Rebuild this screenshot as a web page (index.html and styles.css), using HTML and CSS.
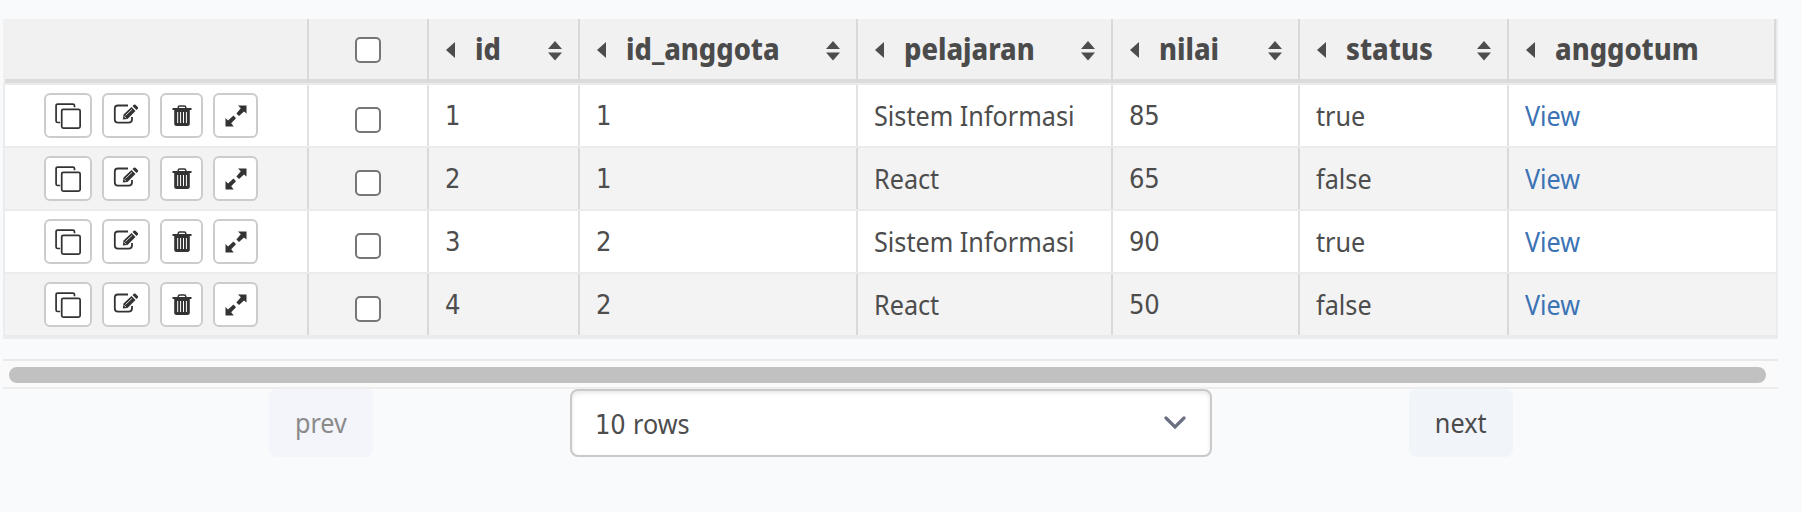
FILE: index.html
```
<!DOCTYPE html>
<html lang="en">
<head>
<meta charset="utf-8">
<title>Records</title>
<link rel="stylesheet" href="styles.css">
</head>
<body>
<svg class="defs" width="0" height="0">
  <symbol id="copy" viewBox="0 0 24 24"><path d="M4.8 18H2.5Q1 18 1 16.5V2.500Q1 1 2.500 1H16.500Q18 1 18 2.500V4" fill="none" stroke="currentColor" stroke-width="1.600"/><rect x="6.200" y="5.900" width="17" height="17.300" rx="1.500" fill="none" stroke="currentColor" stroke-width="1.600"/></symbol>
  <symbol id="edit" viewBox="0 0 26 22"><path d="M15 2.500H5Q1.800 2.500 1.800 5.700V16.500Q1.800 19.700 5 19.700H15.500Q19 19.700 19 16.500V14" fill="none" stroke="currentColor" stroke-width="1.800"/><path d="M9.800 16.500l.7-5L18.500 4l4 4-8 8zM19.500 3l1.300-1.200q.8-.8 1.700 0l2.300 2.300q.8.900 0 1.700L23.500 7z" fill="currentColor"/><path d="M12.500 12.500L19 6.300M11.200 13.300l1.800 1.900" stroke="#fff" stroke-width=".8" fill="none"/></symbol>
  <symbol id="trash" viewBox="0 0 20 22"><path d="M.5 3h19v2H.5zM2.200 5h15.600v13.500q0 2.500-2.500 2.500H4.700q-2.500 0-2.500-2.500z" fill="currentColor"/><path d="M6.200 3.600V2.500Q6.200 1 7.700 1h4.600q1.500 0 1.500 1.500v1.100" fill="none" stroke="currentColor" stroke-width="1.500"/><path d="M5.700 7v11M8.600 7v11M11.500 7v11M14.400 7v11" stroke="#fff" stroke-width="1"/></symbol>
  <symbol id="expand" viewBox="0 0 22 22"><path d="M13 .5h8.500V8.500L19 6.500 14 11l-2.600-2.600L15.800 3.200zM.5 21.500V13L3 15.500l5.500-5L11 13.200 6.200 18.200l2.500 3.300z" fill="currentColor"/></symbol>
</svg>
<main class="page">
  <div class="table" id="table"></div>
  <div class="scrollbar"><div class="thumb"></div></div>
  <div class="pager">
    <button class="nav prev"><span>prev</span></button>
    <div class="select"><span class="value"><span class="digits">10</span><span class="word">rows</span></span><svg width="22" height="14" viewBox="0 0 22 14"><path d="M2 2l9 9 9-9" fill="none" stroke="#6b6f82" stroke-width="3.200" stroke-linecap="round"/></svg></div>
    <button class="nav next"><span>next</span></button>
  </div>
</main>
<script src="table.js"></script>
</body>
</html>
```
FILE: table.js
```
const columns = ["id", "id_anggota", "pelajaran", "nilai", "status", "anggotum"];
const rows = [
  [1, 1, "Sistem Informasi", 85, "true"],
  [2, 1, "React", 65, "false"],
  [3, 2, "Sistem Informasi", 90, "true"],
  [4, 2, "React", 50, "false"]
];
const sizes = { copy: [26, 26], edit: [26, 22], trash: [20, 22], expand: [22, 22] };
const icon = n => `<button class="action ${n}"><svg width="${sizes[n][0]}" height="${sizes[n][1]}"><use href="#${n}"/></svg></button>`;
const box = '<div class="cell check"><span class="box"></span></div>';
const sort = '<svg class="sort" width="14" height="20" viewBox="0 0 14 20"><path d="M7 0l7 8H0zM0 11.500h14l-7 8z" fill="currentColor"/></svg>';

const head = `<div class="row head"><div class="cell"></div>${box}` +
  columns.map(c => `<div class="cell"><svg class="arrow" width="10" height="16" viewBox="0 0 10 16"><path d="M9 0v16L0 8z" fill="currentColor"/></svg><span class="title">${c}</span>${c === "anggotum" ? "" : sort}</div>`).join("") + "</div>";

const body = rows.map(r => `<div class="row"><div class="cell actions">${Object.keys(sizes).map(icon).join("")}</div>${box}` +
  r.map(v => `<div class="cell"><span class="${typeof v === "number" ? "digits" : "word"}">${v}</span></div>`).join("") +
  '<div class="cell"><a class="word view">View</a></div></div>').join("");

document.getElementById("table").innerHTML = head + body;
```
FILE: styles.css
```
* { box-sizing: border-box; }
body { margin: 0; background: #f9fafc; color: #4d4d4d; font: 28px/36px "Noto Sans", sans-serif; }
.defs { display: block; height: 0; }
.page { padding: 19px 24px 0 3px; height: 512px; overflow: hidden; }
.table { border: 2px solid #ebecee; border-top: 0; border-bottom: 2px solid #ebecee; }
.row { display: grid; grid-template-columns: 304px 120px 151px 278px 255px 187px 209px 267px; height: 63px; border-bottom: 2px solid #ebebeb; background: #fff; }
.row:nth-child(odd) { background: #f3f3f3; }
.cell { display: flex; align-items: center; padding: 0 16px; border-right: 2px solid #e2e2e2; white-space: nowrap; min-width: 0; }
.row:nth-child(odd) .cell { border-right-color: #d9d9d9; }
.row:not(.head) .cell:last-child { border-right: 0; }
.row.head { height: 66px; background: #f1f1f1; margin-left: -2px; padding-left: 2px; }
.head .cell { border-bottom: 4px solid #dcdcdc; }
.head .arrow { margin: 1px 19px 0 1px; flex: none; }
.head .title { font-weight: 800; font-size: 30px; color: #4b4b4b; padding-bottom: 1px; transform: scaleX(.91); transform-origin: 0 50%; }
.head .sort { margin: 3px 0 0 auto; flex: none; }
.head .title + .sort { margin-left: auto; }
.check { justify-content: center; padding: 0; }
.box { width: 26px; height: 26px; border: 2px solid #767676; border-radius: 5px; background: #fff; margin-top: 9px; }
.head .box { margin-top: 2px; }
.actions { gap: 10px; padding: 0 0 0 39px; }
.action { width: 48px; height: 45px; padding: 0; border: 2px solid #ccc; border-radius: 6px; background: #fff; color: #333; display: flex; align-items: center; justify-content: center; }
.action.trash { width: 43px; }
.action.expand { width: 45px; }
.action.edit svg { margin-bottom: 3px; }
.action svg { display: block; }
.digits { font-family: "DejaVu Sans Condensed", "DejaVu Sans", sans-serif; font-stretch: condensed; font-size: 27px; letter-spacing: -.2px; }
.word, .nav span { display: inline-block; transform: scaleX(.9); }
.word { transform-origin: 0 50%; padding-bottom: 2px; }
.view { color: #3b73b5; }
.scrollbar { height: 30px; margin-top: 20px; padding: 6px 12px 6px 6px; background: #fafafa; border-top: 2px solid #e8e9e9; border-bottom: 2px solid #ededed; }
.thumb { height: 16px; border-radius: 8px; background: #c1c1c1; }
.pager { display: flex; height: 68px; padding-left: 266px; }
.nav { border: 0; padding: 0 0 2px; border-radius: 8px; font: inherit; width: 104px; background: #f1f4f9; color: #4b4b4b; }
.prev { background: #f3f5fa; color: #8b8b8b; }
.select { width: 642px; margin: 0 197px; padding: 0 24px 0 23px; border: 2px solid #c9c9c9; border-radius: 8px; background: #fff; box-shadow: inset 0 2px 4px rgba(0,0,0,.1); display: flex; align-items: center; justify-content: space-between; }
.value { display: flex; align-items: baseline; gap: 7px; padding-top: 2px; }
```
